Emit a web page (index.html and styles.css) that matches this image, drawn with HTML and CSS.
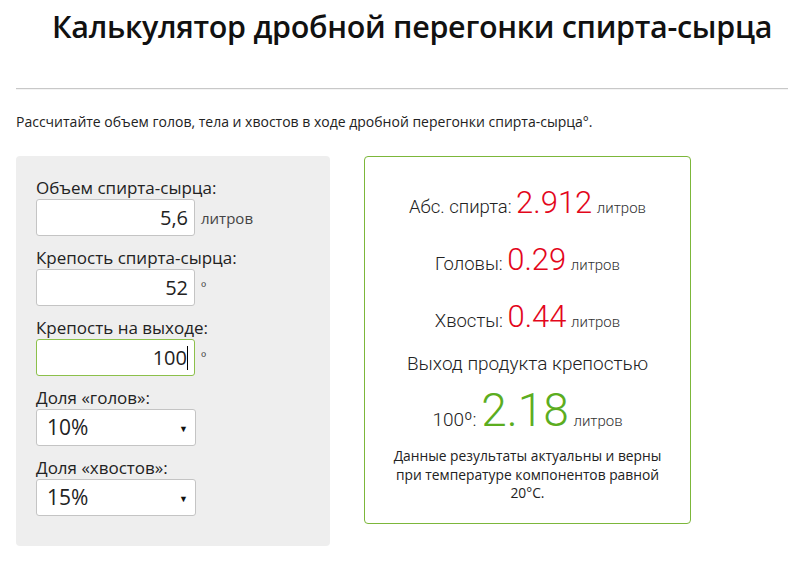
FILE: index.html
```html
<!DOCTYPE html>
<html lang="ru">
<head>
<meta charset="utf-8">
<title>Калькулятор дробной перегонки спирта-сырца</title>
<link rel="stylesheet" href="styles.css">
</head>
<body>
<header class="page-head">
  <h1 class="title">Калькулятор дробной перегонки спирта-сырца</h1>
</header>
<hr class="divider">
<p class="intro">Рассчитайте объем голов, тела и хвостов в ходе дробной перегонки спирта-сырца°.</p>
<main class="calc">
  <form class="panel">
    <div class="field">
      <label class="label">Объем спирта-сырца:</label>
      <div class="row"><span class="box">5,6</span><span class="unit">литров</span></div>
    </div>
    <div class="field">
      <label class="label">Крепость спирта-сырца:</label>
      <div class="row"><span class="box">52</span><span class="deg">º</span></div>
    </div>
    <div class="field">
      <label class="label">Крепость на выходе:</label>
      <div class="row"><span class="box box-active">100<span class="caret"></span></span><span class="deg">º</span></div>
    </div>
    <div class="field">
      <label class="label">Доля «голов»:</label>
      <div class="row"><span class="select">10%<span class="arrow">▼</span></span></div>
    </div>
    <div class="field">
      <label class="label">Доля «хвостов»:</label>
      <div class="row"><span class="select">15%<span class="arrow">▼</span></span></div>
    </div>
  </form>
  <section class="results">
    <p class="res">Абс. спирта: <span class="num">2.912</span> <span class="lit">литров</span></p>
    <p class="res">Головы: <span class="num">0.29</span> <span class="lit">литров</span></p>
    <p class="res">Хвосты: <span class="num">0.44</span> <span class="lit">литров</span></p>
    <p class="res-title">Выход продукта крепостью</p>
    <p class="res-main">100º: <span class="big">2.18</span> <span class="lit">литров</span></p>
    <p class="note">Данные результаты актуальны и верны при температуре компонентов равной 20°C.</p>
  </section>
</main>
</body>
</html>
```
FILE: styles.css
```css
html, body {
  margin: 0;
  padding: 0;
  background: #fff;
  font-family: "Open Sans", "Liberation Sans", sans-serif;
  color: #222;
}
.page-head {
  padding: 4px 0 0 52px;
  height: 88px;
  box-sizing: border-box;
}
.title {
  margin: 0;
  font-size: 30.5px;
  font-weight: 600;
  line-height: 44px;
  color: #111;
  letter-spacing: -0.3px;
}
.divider {
  margin: 0 0 0 16px;
  border: 0;
  border-top: 1px solid #c8c8c8;
  border-bottom: 1px solid #f4f4f4;
  height: 0;
}
.intro {
  margin: 22px 0 0 16px;
  font-size: 14px;
  line-height: 20px;
  color: #222;
}
.calc {
  display: flex;
  align-items: flex-start;
  margin: 24px 0 0 16px;
}
.panel {
  width: 314px;
  height: 390px;
  box-sizing: border-box;
  background: #eee;
  border-radius: 4px;
  padding: 21px 20px 0 20px;
}
.field {
  margin-bottom: 11px;
}
.label {
  display: block;
  font-size: 17px;
  line-height: 22px;
  color: #222;
}
.row {
  display: flex;
  align-items: center;
}
.box, .select {
  position: relative;
  display: block;
  box-sizing: border-box;
  height: 37px;
  background: #fff;
  border: 1px solid #c4c4c4;
  border-radius: 3px;
  font-size: 20px;
  line-height: 35px;
  color: #222;
}
.box {
  width: 159px;
  text-align: right;
  padding-right: 6px;
}
.box-active {
  border-color: #8cc04a;
}
.caret {
  display: inline-block;
  width: 1px;
  height: 24px;
  background: #000;
  vertical-align: -5px;
}
.select {
  width: 160px;
  padding-left: 10px;
  font-size: 21px;
}
.arrow {
  position: absolute;
  right: 7px;
  top: 1px;
  font-size: 9px;
  color: #111;
}
.unit {
  margin-left: 6px;
  font-size: 15px;
  color: #444;
}
.deg {
  margin-left: 6px;
  font-size: 14px;
  color: #444;
  align-self: flex-start;
  margin-top: 8px;
}
.results {
  width: 327px;
  height: 368px;
  box-sizing: border-box;
  margin-left: 34px;
  border: 1px solid #7cb73a;
  border-radius: 4px;
  text-align: center;
  padding-top: 17px;
  font-family: Roboto, "Open Sans", sans-serif;
  font-weight: 300;
  color: #222;
}
.res {
  margin: 0;
  height: 57px;
  font-size: 18.5px;
  line-height: 57px;
}
.num {
  font-size: 31px;
  color: #e3061b;
}
.lit {
  font-size: 15px;
  color: #333;
}
.res-title {
  margin: 0;
  height: 38px;
  font-size: 19px;
  line-height: 38px;
}
.res-main {
  margin: 0;
  height: 54px;
  font-size: 19px;
  line-height: 54px;
}
.big {
  font-size: 46px;
  color: #5cad1f;
}
.note {
  margin: 10px 22px 0 22px;
  font-family: "Open Sans", sans-serif;
  font-weight: 400;
  font-size: 13.8px;
  line-height: 18.5px;
  color: #222;
}
```
